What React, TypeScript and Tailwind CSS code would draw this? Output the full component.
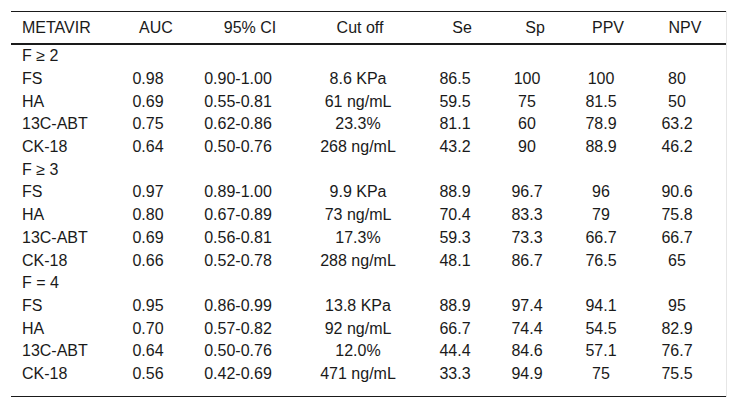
const head = ["METAVIR", "AUC", "95% CI", "Cut off", "Se", "Sp", "PPV", "NPV"];

type Row = string[];

const groups: { label: string; rows: Row[] }[] = [
  {
    label: "F ≥ 2",
    rows: [
      ["FS", "0.98", "0.90-1.00", "8.6 KPa", "86.5", "100", "100", "80"],
      ["HA", "0.69", "0.55-0.81", "61 ng/mL", "59.5", "75", "81.5", "50"],
      ["13C-ABT", "0.75", "0.62-0.86", "23.3%", "81.1", "60", "78.9", "63.2"],
      ["CK-18", "0.64", "0.50-0.76", "268 ng/mL", "43.2", "90", "88.9", "46.2"],
    ],
  },
  {
    label: "F ≥ 3",
    rows: [
      ["FS", "0.97", "0.89-1.00", "9.9 KPa", "88.9", "96.7", "96", "90.6"],
      ["HA", "0.80", "0.67-0.89", "73 ng/mL", "70.4", "83.3", "79", "75.8"],
      ["13C-ABT", "0.69", "0.56-0.81", "17.3%", "59.3", "73.3", "66.7", "66.7"],
      ["CK-18", "0.66", "0.52-0.78", "288 ng/mL", "48.1", "86.7", "76.5", "65"],
    ],
  },
  {
    label: "F = 4",
    rows: [
      ["FS", "0.95", "0.86-0.99", "13.8 KPa", "88.9", "97.4", "94.1", "95"],
      ["HA", "0.70", "0.57-0.82", "92 ng/mL", "66.7", "74.4", "54.5", "82.9"],
      ["13C-ABT", "0.64", "0.50-0.76", "12.0%", "44.4", "84.6", "57.1", "76.7"],
      ["CK-18", "0.56", "0.42-0.69", "471 ng/mL", "33.3", "94.9", "75", "75.5"],
    ],
  },
];

const cols = "grid grid-cols-[101px_72px_108px_132px_62px_82px_66px_86px]";

// header labels sit a little right of the data below them
const headPad = [
  "pl-[11px] text-left",
  "pl-[16px] text-center",
  "pl-[24px] text-center",
  "pl-[4px] text-center",
  "pl-[14px] text-center",
  "pl-[16px] text-center",
  "pl-[14px] text-center",
  "pl-[16px] text-center",
];

function DataRow({ cells }: { cells: Row }) {
  return (
    <div className={`${cols} h-[22.7px] items-center`}>
      {cells.map((c, i) => (
        <div key={i} className={i === 0 ? "pl-[11px] text-left" : "text-center whitespace-nowrap"}>
          {c}
        </div>
      ))}
    </div>
  );
}

export default function App() {
  return (
    <div className="h-[407px] w-[738px] bg-white pl-[11px] pt-[11px] text-[16px] leading-[20px] text-[#1a1a1a] [font-family:'Liberation_Sans',Arial,sans-serif]">
      <div className="w-[716px] border-r border-[#e6e6e6]">
        <div className={`${cols} h-[34px] items-center border-t border-b-2 border-[#1a1a1a]`}>
          {head.map((h, i) => (
            <div key={h} className={`${headPad[i]} whitespace-nowrap`}>
              {h}
            </div>
          ))}
        </div>
        <div className="h-[352px] border-b border-[#1a1a1a]">
          {groups.map((g) => (
            <div key={g.label}>
              <div className="flex h-[22.7px] items-center pl-[11px]">{g.label}</div>
              {g.rows.map((r, i) => (
                <DataRow key={i} cells={r} />
              ))}
            </div>
          ))}
        </div>
      </div>
    </div>
  );
}
